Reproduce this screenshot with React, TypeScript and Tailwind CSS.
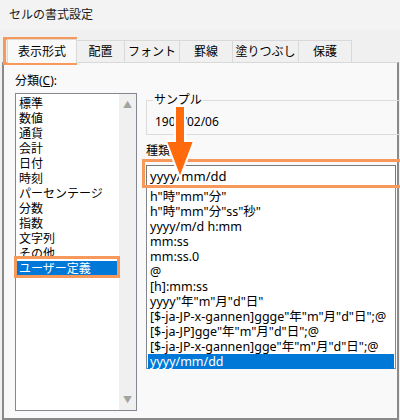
import React from 'react';

const FONT = { fontFamily: '"Noto Sans", "Noto Sans CJK JP", sans-serif' };

const tabs = [
  { label: '表示形式', w: 'w-[70px]' },
  { label: '配置', w: 'w-[48px]' },
  { label: 'フォント', w: 'w-[55px]' },
  { label: '罫線', w: 'w-[53px]' },
  { label: '塗りつぶし', w: 'w-[66px]' },
  { label: '保護', w: 'w-[53px]' },
];

const categories = [
  '標準',
  '数値',
  '通貨',
  '会計',
  '日付',
  '時刻',
  'パーセンテージ',
  '分数',
  '指数',
  '文字列',
  'その他',
  'ユーザー定義',
];

const formats = [
  'h"時"mm"分"',
  'h"時"mm"分"ss"秒"',
  'yyyy/m/d h:mm',
  'mm:ss',
  'mm:ss.0',
  '@',
  '[h]:mm:ss',
  'yyyy"年"m"月"d"日"',
  '[$-ja-JP-x-gannen]ggge"年"m"月"d"日";@',
  '[$-ja-JP]gge"年"m"月"d"日";@',
  '[$-ja-JP-x-gannen]gge"年"m"月"d"日";@',
  'yyyy/mm/dd',
];

function Arrow() {
  return (
    <svg className="absolute left-[163px] top-[104px]" width="34" height="78" viewBox="0 0 34 78">
      <path
        d="M12 2 H22 V37 H31 L17 74 L3 37 H12 Z"
        fill="#ff6a0d"
        stroke="#ffffff"
        strokeWidth="2"
        strokeLinejoin="miter"
      />
    </svg>
  );
}

export default function App() {
  return (
    <div className="relative w-[400px] h-[420px] overflow-hidden bg-[#f0f0f0] text-[12px] text-black" style={FONT}>
      {/* title bar */}
      <div className="h-[30px] flex items-center pl-[9px] bg-[#f3f3f3] text-[12px] text-[#1a1a1a]">
        セルの書式設定
      </div>

      {/* tab strip */}
      <div className="h-[32px] flex items-end pl-[7px]">
        {tabs.map((t, i) => (
          <div
            key={t.label}
            className={
              i === 0
                ? `${t.w} h-[24px] flex items-center justify-center bg-[#f9f9f9] border-x border-t border-[#d9d9d9] text-[12px] -mb-px relative z-10`
                : `${t.w} h-[22px] flex items-center justify-center border-r border-t border-[#d9d9d9] text-[12px]`
            }
          >
            {t.label}
          </div>
        ))}
      </div>

      {/* panel */}
      <div className="ml-[2px] w-[397px] h-[358px] bg-[#f9f9f9] border-t border-[#d9d9d9] border-l-2 border-l-[#8a8a8a] border-b-2 border-b-[#8a8a8a] border-r-2 border-r-[#8a8a8a] flex">
        {/* category column */}
        <div className="ml-[11px] w-[122px] flex flex-col">
          <div className="mt-[10px] h-[16px] leading-[16px]">
            分類(<span className="underline">C</span>):
          </div>
          <div className="mt-[4px] h-[318px] border border-[#828790] bg-white flex">
            <div className="flex-1 pt-[2px] pl-px">
              {categories.map((c, i) => (
                <div
                  key={c}
                  className={
                    i === categories.length - 1
                      ? 'h-[15px] leading-[15px] pl-[2px] bg-[#0078d7] text-white'
                      : 'h-[15px] leading-[15px] pl-[2px]'
                  }
                >
                  {c}
                </div>
              ))}
            </div>
            <div className="w-[17px] bg-[#f0f0f0] flex flex-col justify-between items-center py-[6px] text-[#a3a3a3] text-[9px] leading-[9px]">
              <span>▲</span>
              <span>▼</span>
            </div>
          </div>
        </div>

        {/* type column */}
        <div className="ml-[9px] w-[250px] flex flex-col">
          <fieldset className="mt-[30px] w-[270px] h-[42px] border border-[#dcdcdc] pl-[8px]">
            <legend className="ml-[-2px] px-px h-[14px] leading-[14px]">サンプル</legend>
            <div className="mt-[7px] leading-[15px]">1900/02/06</div>
          </fieldset>
          <div className="mt-[8px] h-[16px] leading-[16px]">
            種類(<span className="underline">T</span>):
          </div>
          <div className="mt-[6px] h-[23px] border border-[#7a7a7a] bg-white pl-[3px] leading-[21px] text-[13px]">
            yyyy/mm/dd
          </div>
          <div className="h-[181px] border-x border-b border-[#828790] bg-white pt-[1px] pl-px pr-px">
            {formats.map((f, i) => (
              <div
                key={f}
                className={
                  i === formats.length - 1
                    ? 'h-[15px] leading-[15px] pl-[2px] bg-[#0078d7] text-white text-[12.5px] whitespace-nowrap'
                    : 'h-[15px] leading-[15px] pl-[2px] text-[12.5px] whitespace-nowrap'
                }
              >
                {f}
              </div>
            ))}
          </div>
        </div>
      </div>

      {/* highlight overlays */}
      <div className="absolute left-[3px] top-[37px] w-[74px] h-[28px] border-[3px] border-[#f6995a]" />
      <div className="absolute left-[14px] top-[256px] w-[106px] h-[22px] border-[3px] border-[#f6995a]" />
      <div className="absolute left-[142px] top-[159px] w-[262px] h-[29px] border-[3px] border-[#f6995a]" />
      <Arrow />
    </div>
  );
}
